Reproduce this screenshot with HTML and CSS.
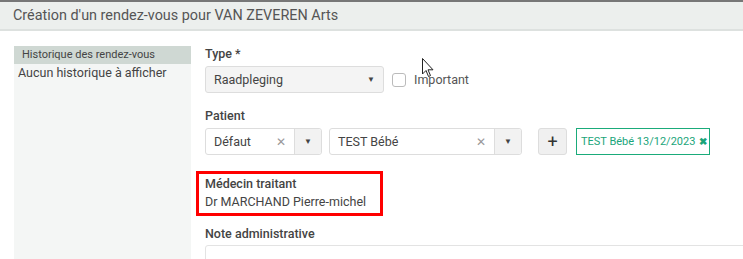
FILE: index.html
```html
<!DOCTYPE html>
<html lang="fr">
<head>
    <meta charset="UTF-8">
    <meta name="viewport" content="width=device-width, initial-scale=1.0">
    <title>Création d'un rendez-vous</title>
    <link rel="stylesheet" href="styles.css">
</head>
<body>

    <div class="modal-header">Création d'un rendez-vous pour VAN ZEVEREN Arts</div>

    <div class="modal-body">
        <div class="history">
            <div class="history-title">Historique des rendez-vous</div>
            <div class="history-empty">Aucun historique à afficher</div>
        </div>

        <div class="form">
            <div class="field">
                <label class="field-label">Type *</label>
                <div class="row">
                    <div class="select select-type">
                        <span class="select-value">Raadpleging</span>
                        <span class="caret">&#9660;</span>
                    </div>
                    <label class="check"><span class="check-box"></span> Important</label>
                </div>
            </div>

            <div class="field">
                <label class="field-label">Patient</label>
                <div class="row">
                    <div class="select select-combo select-default">
                        <span class="select-value">Défaut</span>
                        <span class="clear">&#10005;</span>
                        <span class="combo-caret">&#9660;</span>
                    </div>
                    <div class="select select-combo select-patient">
                        <span class="select-value">TEST Bébé</span>
                        <span class="clear">&#10005;</span>
                        <span class="combo-caret">&#9660;</span>
                    </div>
                    <button class="add-btn">+</button>
                    <div class="tag">TEST Bébé 13/12/2023 <span class="tag-x">&#10006;</span></div>
                </div>
            </div>

            <div class="doctor">
                <div class="field-label">Médecin traitant</div>
                <div class="doctor-name">Dr MARCHAND Pierre-michel</div>
            </div>

            <div class="field note">
                <label class="field-label">Note administrative</label>
                <div class="textarea"></div>
            </div>
        </div>
    </div>

    <svg class="cursor" width="12" height="20" viewBox="0 0 12 20">
        <path d="M0.5 0.5 L0.5 16 L4 12.5 L6.5 18.5 L8.5 17.6 L6 11.8 L11 11.8 Z" fill="#fff" stroke="#222" stroke-width="1"/>
    </svg>

</body>
</html>
```

FILE: styles.css
```css
body {
    margin: 0;
    font-family: Roboto, "Liberation Sans", sans-serif;
    color: #444;
    background: #fff;
    overflow: hidden;
    position: relative;
    height: 259px;
}

.modal-header {
    border-top: 2px solid #777;
    border-bottom: 2px solid #dde1df;
    background: #ecefed;
    height: 27px;
    line-height: 27px;
    padding-left: 13px;
    font-size: 14.4px;
    color: #555;
}

.modal-body {
    display: flex;
    padding: 15px 0 0 14px;
    gap: 14px;
}

.history {
    width: 177px;
    height: 230px;
    background: #f4f6f5;
    flex-shrink: 0;
}

.history-title {
    background: #cfd8d3;
    height: 18px;
    line-height: 18px;
    padding-left: 8px;
    font-size: 11px;
    color: #444;
}

.history-empty {
    padding-left: 4px;
    font-size: 12.5px;
    line-height: 18px;
    color: #444;
}

.form {
    flex: 1;
    white-space: nowrap;
}

.field {
    margin-bottom: 15px;
}

.field-label {
    display: block;
    font-size: 12.5px;
    font-weight: 500;
    line-height: 16px;
    margin-bottom: 4px;
    color: #444;
}

.row {
    display: flex;
    align-items: center;
}

.select {
    display: flex;
    align-items: center;
    box-sizing: border-box;
    height: 27px;
    border: 1px solid #ddd;
    border-radius: 3px;
    font-size: 12.5px;
    color: #444;
}

.select-type {
    width: 179px;
    background: #f4f4f4;
    padding: 0 8px;
}

.select-value {
    flex: 1;
}

.caret {
    font-size: 8px;
    color: #444;
}

.check {
    display: flex;
    align-items: center;
    margin-left: 8px;
    font-size: 12.5px;
    color: #555;
}

.check-box {
    width: 12px;
    height: 12px;
    border: 1px solid #bbb;
    border-radius: 3px;
    margin-right: 8px;
    background: #fff;
}

.select-combo {
    padding-left: 8px;
    background: #fff;
}

.select-default {
    width: 117px;
}

.select-patient {
    width: 193px;
    margin-left: 7px;
}

.clear {
    font-size: 12px;
    color: #999;
    margin-right: 8px;
}

.combo-caret {
    width: 26px;
    height: 100%;
    display: flex;
    align-items: center;
    justify-content: center;
    background: #f2f2f2;
    border-left: 1px solid #ddd;
    font-size: 8px;
    color: #444;
    border-radius: 0 3px 3px 0;
}

.add-btn {
    margin-left: 16px;
    width: 29px;
    height: 27px;
    border: 1px solid #ddd;
    border-radius: 3px;
    background: #f0f0f0;
    font-family: inherit;
    font-size: 18px;
    line-height: 1;
    color: #333;
    padding: 0;
}

.tag {
    margin-left: 9px;
    box-sizing: border-box;
    height: 27px;
    line-height: 25px;
    border: 1px solid #1aab7a;
    padding: 0 4px;
    font-size: 11px;
    color: #1aa57a;
    width: 134px;
}

.tag-x {
    font-size: 10px;
    font-weight: 700;
    margin-left: 1px;
}

.doctor {
    width: 187px;
    box-sizing: border-box;
    margin: 16px 0 10px -9px;
    border: 3px solid #f00;
    padding: 2px 6px 3px;
}

.doctor .field-label {
    margin-bottom: 2px;
}

.doctor-name {
    font-size: 12.5px;
    line-height: 16px;
    color: #444;
}

.note .field-label {
    margin-bottom: 3px;
}

.textarea {
    height: 40px;
    border: 1px solid #e3e3e3;
    border-radius: 3px;
    margin-right: -4px;
}

.cursor {
    position: absolute;
    left: 422px;
    top: 58px;
}
```
